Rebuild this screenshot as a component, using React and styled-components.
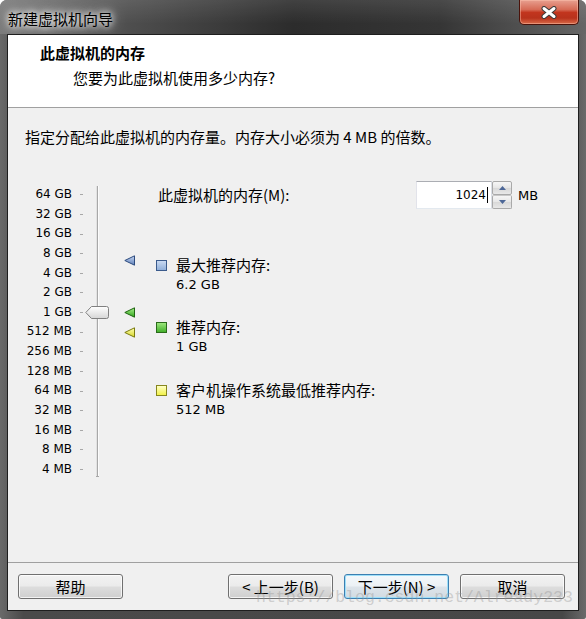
import React from "react";
import styled, { createGlobalStyle, css } from "styled-components";

const CJK = `"Noto Sans CJK SC", "Microsoft YaHei", sans-serif`;
const LATIN = `"DejaVu Sans", "Noto Sans CJK SC", sans-serif`;
const ROW = 19.64;

const GlobalStyle = createGlobalStyle`
  html, body { margin: 0; padding: 0; background: #fff; }
  body { font-family: ${CJK}; font-size: 15px; color: #000; }
`;

const Window = styled.div`
  position: relative;
  width: 586px;
  height: 619px;
  box-sizing: border-box;
  display: flex;
  flex-direction: column;
  padding: 0 7px 8px;
  border-radius: 7px 7px 2px 2px;
  background: linear-gradient(90deg, #6a6a6a, #4a4a4a 4%, #474747 96%, #6a6a6a);
  overflow: hidden;
`;

const TitleBar = styled.div`
  height: 34px;
  margin: 0 -7px;
  padding-left: 8px;
  display: flex;
  justify-content: space-between;
  align-items: flex-start;
  background: linear-gradient(180deg, rgba(255, 255, 255, 0.1), rgba(0, 0, 0, 0) 70%),
    linear-gradient(90deg, #7a7a7a 0%, #4e4e4e 22%, #2c2c2c 50%, #353535 75%, #666 100%);
`;

const TitleText = styled.div`
  margin-top: 9px;
  line-height: 20px;
  font-size: 15px;
  color: #000;
  text-shadow: 0 0 6px #fff, 0 0 10px rgba(255, 255, 255, 0.9), 0 0 16px rgba(255, 255, 255, 0.6);
`;

const CloseButton = styled.div`
  width: 60px;
  height: 25px;
  margin-right: 7px;
  box-sizing: border-box;
  display: flex;
  align-items: center;
  justify-content: center;
  border: 1px solid #4a120a;
  border-top: none;
  border-radius: 0 0 5px 5px;
  background: linear-gradient(180deg, #e8a090 0%, #d66a55 40%, #c2351e 52%, #b8321c 75%, #d86a48 100%);
  box-shadow: inset 0 0 0 1px rgba(255, 200, 180, 0.45);
`;

const Client = styled.div`
  flex: 1;
  display: flex;
  flex-direction: column;
  border: 1px solid #1e1e1e;
  background: #f0f0f0;
`;

const Header = styled.div`
  height: 73px;
  box-sizing: border-box;
  padding: 9px 0 0 32px;
  background: #fff;
  border-bottom: 1px solid #a0a0a0;
`;

const HeaderTitle = styled.div`
  font-weight: bold;
  line-height: 18px;
`;

const HeaderSub = styled.div`
  margin: 7px 0 0 33px;
  line-height: 18px;
`;

const Body = styled.div`
  flex: 1;
  padding-top: 19px;
`;

const Intro = styled.div`
  margin-left: 17px;
  line-height: 20px;
`;

const Main = styled.div`
  display: flex;
  margin-top: 34px;
`;

const SliderArea = styled.div`
  position: relative;
  display: flex;
  width: 148px;
  padding-top: 4px;
`;

const Scale = styled.div`
  display: flex;
  flex-direction: column;
`;

const ScaleRow = styled.div`
  height: ${ROW}px;
  display: flex;
  align-items: center;
`;

const ScaleLabel = styled.span`
  width: 64px;
  text-align: right;
  font-family: ${LATIN};
  font-size: 12px;
  line-height: ${ROW}px;
`;

const Tick = styled.span`
  width: 3px;
  height: 1px;
  margin-left: 8px;
  background: #a8a8a8;
`;

const Track = styled.div`
  width: 3px;
  height: 290px;
  margin: 1px 0 0 13px;
  background: linear-gradient(90deg, #e2e2e2 0 1px, #a8a8a8 1px 2px, #fcfcfc 2px 3px);
  border-bottom: 1px solid #a8a8a8;
`;

const Thumb = styled.svg`
  position: absolute;
  left: 77px;
`;

const Marker = styled.svg`
  position: absolute;
  left: 116px;
`;

const Panel = styled.div`
  display: flex;
  flex-direction: column;
`;

const MemRow = styled.div`
  height: 28px;
  margin-left: 2px;
  display: flex;
  align-items: center;
`;

const MemLabel = styled.span`
  width: 258px;
  line-height: 20px;
`;

const NumberBox = styled.div`
  width: 76px;
  height: 28px;
  box-sizing: border-box;
  padding-right: 3px;
  display: flex;
  align-items: center;
  justify-content: flex-end;
  background: #fff;
  border: 1px solid;
  border-color: #abadb3 #dbdfe6 #e3e9ef #e2e3ea;
  font-family: ${LATIN};
  font-size: 12px;
`;

const Caret = styled.span`
  width: 1px;
  height: 16px;
  margin-left: 1px;
  background: #000;
`;

const Spin = styled.div`
  display: flex;
  flex-direction: column;
  width: 20px;
  height: 28px;
`;

const SpinButton = styled.div`
  flex: 1;
  box-sizing: border-box;
  display: flex;
  align-items: center;
  justify-content: center;
  border: 1px solid #a9a9a9;
  border-radius: 2px;
  background: linear-gradient(180deg, #f6f6f6, #e6e6e6 50%, #d8d8d8 51%, #e8e8e8);
  ${(p) => p.$down && css`border-top-color: #c8c8c8;`}
`;

const Unit = styled.span`
  margin-left: 6px;
  font-family: ${LATIN};
  font-size: 13px;
`;

const Legend = styled.div`
  margin-top: 46px;
  display: flex;
  flex-direction: column;
`;

const LegendItem = styled.div`
  display: grid;
  grid-template-columns: 20px auto;
  line-height: 20px;
  margin-top: ${(p) => p.$gap}px;
`;

const Swatch = styled.span`
  width: 11px;
  height: 11px;
  box-sizing: border-box;
  margin-top: 5px;
  border: 1px solid ${(p) => p.$edge};
  background: ${(p) => p.$fill};
`;

const LegendValue = styled.span`
  grid-column: 2;
  font-family: ${LATIN};
  font-size: 13px;
`;

const Footer = styled.div`
  height: 48px;
  box-sizing: border-box;
  display: flex;
  padding: 11px 13px 0 10px;
  border-top: 1px solid #a0a0a0;
`;

const Spacer = styled.div`
  flex: 1;
`;

const Button = styled.div`
  width: 105px;
  height: 25px;
  box-sizing: border-box;
  margin-left: ${(p) => (p.$gap ? 11 : 0)}px;
  display: flex;
  align-items: center;
  justify-content: center;
  border: 1px solid #707070;
  border-radius: 3px;
  background: linear-gradient(180deg, #f2f2f2 0%, #ebebeb 48%, #dddddd 52%, #cfcfcf 100%);
  box-shadow: inset 0 0 0 1px rgba(255, 255, 255, 0.75);
  line-height: 20px;
  ${(p) =>
    p.$focused &&
    css`
      border-color: #3c7fb1;
      box-shadow: inset 0 0 0 1px #9edff9;
      background: linear-gradient(180deg, #f4f8fb 0%, #ecf1f5 48%, #dde4ea 52%, #d2dbe2 100%);
    `}
`;

const Watermark = styled.div`
  position: absolute;
  left: 256px;
  top: 588px;
  font-family: "Liberation Mono", "DejaVu Sans Mono", monospace;
  font-size: 16.5px;
  color: rgba(150, 150, 150, 0.4);
  pointer-events: none;
`;

const scale = [
  "64 GB", "32 GB", "16 GB", "8 GB", "4 GB", "2 GB", "1 GB",
  "512 MB", "256 MB", "128 MB", "64 MB", "32 MB", "16 MB", "8 MB", "4 MB",
];

// centre of a value (in MB) on the log2 scale, relative to SliderArea
const yOf = (mb) => 4 + ROW / 2 + (16 - Math.log2(mb)) * ROW;

const markers = [
  { mb: 6.2 * 1024, fill: ["#c6d6f2", "#5d7fb8"], edge: "#2d4b7e" },
  { mb: 1024, fill: ["#a8f08a", "#2fa41c"], edge: "#1f6412" },
  { mb: 512, fill: ["#ffffb0", "#d6d62a"], edge: "#7a7a10" },
];

const legend = [
  { label: "最大推荐内存:", value: "6.2 GB", fill: "linear-gradient(#c9d9f1, #91b0da)", edge: "#3b5b8c", gap: 0 },
  { label: "推荐内存:", value: "1 GB", fill: "linear-gradient(#9be67c, #44b02c)", edge: "#2a6a1a", gap: 22 },
  { label: "客户机操作系统最低推荐内存:", value: "512 MB", fill: "linear-gradient(#ffffc4, #f2f24a)", edge: "#86861e", gap: 23 },
];

const CloseGlyph = () => (
  <svg width="16" height="13" viewBox="0 0 16 13">
    <path d="M3 2.5 L13 10.5 M13 2.5 L3 10.5" stroke="#3b3b3b" strokeWidth="5" strokeLinecap="round" />
    <path d="M3 2.5 L13 10.5 M13 2.5 L3 10.5" stroke="#fff" strokeWidth="3" strokeLinecap="round" />
  </svg>
);

const SpinArrow = ({ down }) => (
  <svg width="7" height="4" viewBox="0 0 7 4">
    <path d={down ? "M0 0 H7 L3.5 4 Z" : "M0 4 H7 L3.5 0 Z"} fill="#4d6797" />
  </svg>
);

const App = () => {
  return (
    <>
      <GlobalStyle />
      <Window>
        <TitleBar>
          <TitleText>新建虚拟机向导</TitleText>
          <CloseButton>
            <CloseGlyph />
          </CloseButton>
        </TitleBar>
        <Client>
          <Header>
            <HeaderTitle>此虚拟机的内存</HeaderTitle>
            <HeaderSub>您要为此虚拟机使用多少内存?</HeaderSub>
          </Header>
          <Body>
            <Intro>指定分配给此虚拟机的内存量。内存大小必须为 4 MB 的倍数。</Intro>
            <Main>
              <SliderArea>
                <Scale>
                  {scale.map((s) => (
                    <ScaleRow key={s}>
                      <ScaleLabel>{s}</ScaleLabel>
                      <Tick />
                    </ScaleRow>
                  ))}
                </Scale>
                <Track />
                <Thumb width="24" height="13" viewBox="0 0 24 13" style={{ top: yOf(1024) - 6.5 }}>
                  <defs>
                    <linearGradient id="thumbFill" x1="0" y1="0" x2="0" y2="1">
                      <stop offset="0" stopColor="#ffffff" />
                      <stop offset="1" stopColor="#d6d6d6" />
                    </linearGradient>
                  </defs>
                  <path
                    d="M0.8 6.5 L6.5 0.5 H21.5 Q23.5 0.5 23.5 2.5 V10.5 Q23.5 12.5 21.5 12.5 H6.5 Z"
                    fill="url(#thumbFill)"
                    stroke="#808080"
                  />
                </Thumb>
                {markers.map((m, i) => (
                  <Marker
                    key={i}
                    width="12"
                    height="11"
                    viewBox="0 0 12 11"
                    style={{ top: yOf(m.mb) - 5.5 }}
                  >
                    <defs>
                      <linearGradient id={"mk" + i} x1="0" y1="0" x2="0" y2="1">
                        <stop offset="0" stopColor={m.fill[0]} />
                        <stop offset="1" stopColor={m.fill[1]} />
                      </linearGradient>
                    </defs>
                    <path d="M0.8 5.5 L10.5 0.8 V10.2 Z" fill={"url(#mk" + i + ")"} stroke={m.edge} />
                  </Marker>
                ))}
              </SliderArea>
              <Panel>
                <MemRow>
                  <MemLabel>此虚拟机的内存(M):</MemLabel>
                  <NumberBox>
                    1024
                    <Caret />
                  </NumberBox>
                  <Spin>
                    <SpinButton>
                      <SpinArrow />
                    </SpinButton>
                    <SpinButton $down>
                      <SpinArrow down />
                    </SpinButton>
                  </Spin>
                  <Unit>MB</Unit>
                </MemRow>
                <Legend>
                  {legend.map((l) => (
                    <LegendItem key={l.label} $gap={l.gap}>
                      <Swatch $fill={l.fill} $edge={l.edge} />
                      <span>{l.label}</span>
                      <LegendValue>{l.value}</LegendValue>
                    </LegendItem>
                  ))}
                </Legend>
              </Panel>
            </Main>
          </Body>
          <Footer>
            <Button>帮助</Button>
            <Spacer />
            <Button>&lt; 上一步(B)</Button>
            <Button $gap $focused>
              下一步(N) &gt;
            </Button>
            <Button $gap>取消</Button>
          </Footer>
        </Client>
        <Watermark>https://blog.csdn.net/Already233</Watermark>
      </Window>
    </>
  );
};

export default App;
